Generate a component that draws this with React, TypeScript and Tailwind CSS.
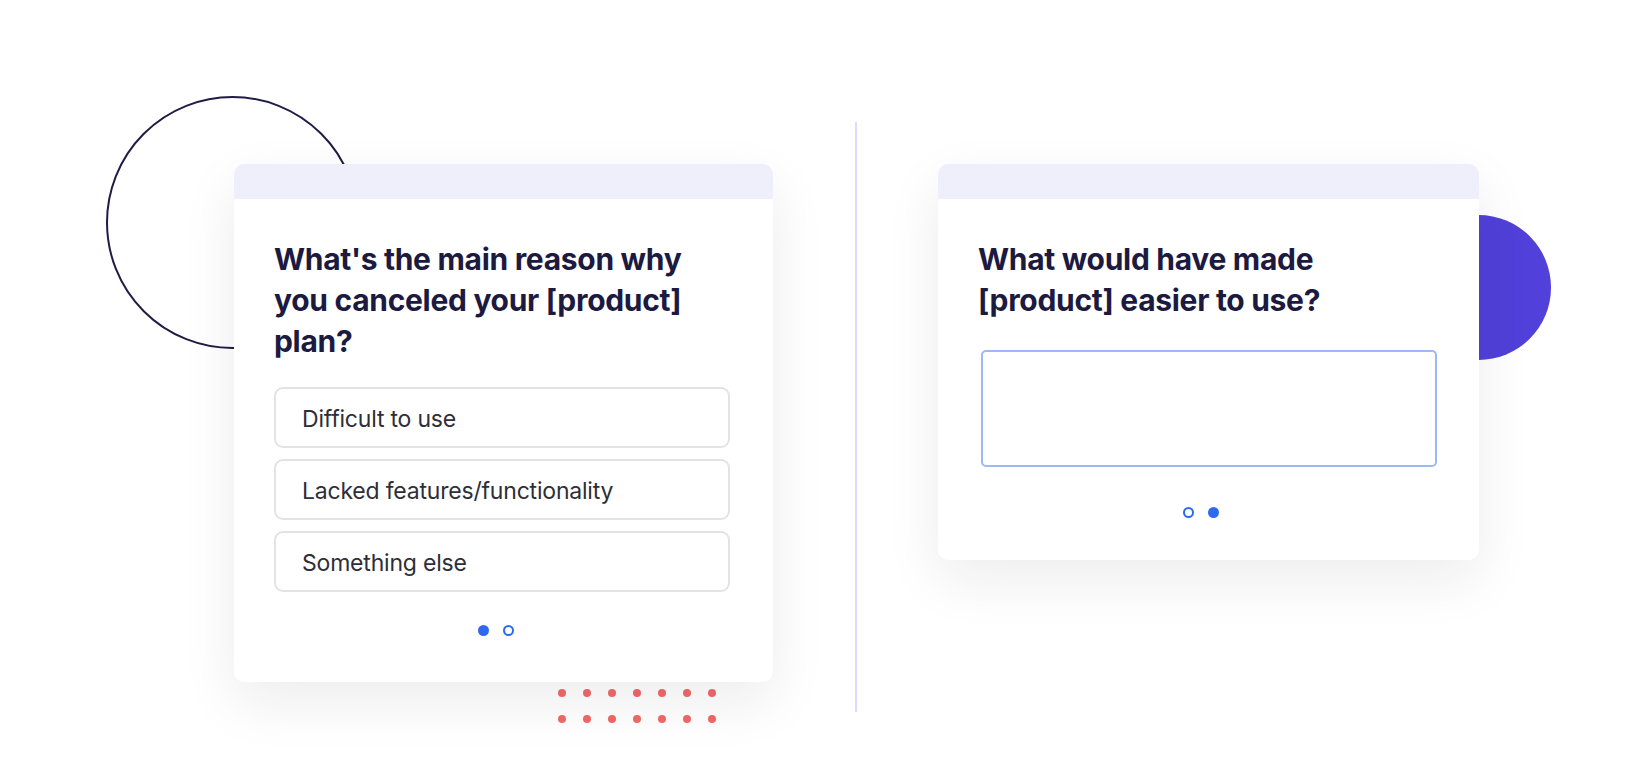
import React from "react";

const options = ["Difficult to use", "Lacked features/functionality", "Something else"];

function Dots({ active }: { active: number }) {
  return (
    <div className="flex justify-center gap-[14px] pr-[16px]">
      {[0, 1].map((i) =>
        i === active ? (
          <span key={i} className="w-[11px] h-[11px] rounded-full bg-[#2d6af0]" />
        ) : (
          <span key={i} className="w-[11px] h-[11px] rounded-full border-2 border-[#2d6af0] bg-white" />
        )
      )}
    </div>
  );
}

function Card({ children }: { children: React.ReactNode }) {
  return (
    <div className="relative z-10 bg-white rounded-[10px] overflow-hidden shadow-[0_20px_55px_rgba(20,20,40,0.08)]">
      <div className="h-[35px] bg-[#efeffb]" />
      {children}
    </div>
  );
}

export default function App() {
  return (
    <div
      className="w-full h-[768px] bg-white overflow-hidden"
      style={{ fontFamily: "Inter, 'Noto Sans', sans-serif" }}
    >
      <div className="flex items-start pl-[234px] pt-[122px]">
        {/* left question */}
        <div className="relative mt-[42px] w-[539px]">
          <div className="absolute left-[-128px] top-[-68px] w-[253px] h-[253px] rounded-full border-2 border-[#1f1d45]" />
          <Card>
            <div className="px-[40px] pt-[40px] pb-[46px]">
              <h2 className="text-[30px] leading-[41px] font-bold text-[#1c1a40] tracking-[-0.3px] w-[445px]">
                What's the main reason why you canceled your [product] plan?
              </h2>
              <div className="mt-[25px] flex flex-col gap-[11px]">
                {options.map((o) => (
                  <div
                    key={o}
                    className="h-[61px] w-[456px] flex items-center pl-[26px] pt-[3px] border-2 border-[#e3e3e6] rounded-[9px] text-[23px] tracking-[-0.2px] text-[#2e2e38]"
                  >
                    {o}
                  </div>
                ))}
              </div>
              <div className="mt-[33px]">
                <Dots active={0} />
              </div>
            </div>
          </Card>
          <div className="absolute left-[324px] top-[525px] grid grid-cols-7 gap-x-[17px] gap-y-[18px]">
            {Array.from({ length: 14 }).map((_, i) => (
              <span key={i} className="w-[8px] h-[8px] rounded-full bg-[#f36868]" />
            ))}
          </div>
        </div>

        {/* divider */}
        <div className="ml-[82px] w-[2px] h-[590px] bg-[#dcdcfa]" />

        {/* right question */}
        <div className="relative ml-[81px] mt-[42px] w-[541px]">
          <div className="absolute left-[468px] top-[51px] w-[145px] h-[145px] rounded-full bg-[#5140d9]" />
          <Card>
            <div className="px-[40px] pt-[40px] pb-[42px]">
              <h2 className="text-[30px] leading-[41px] font-bold text-[#1c1a40] tracking-[-0.3px] w-[400px]">
                What would have made [product] easier to use?
              </h2>
              <div className="mt-[29px] ml-[3px] h-[117px] w-[456px] border-2 border-[#9db8f6] rounded-[5px]" />
              <div className="mt-[40px]">
                <Dots active={1} />
              </div>
            </div>
          </Card>
        </div>
      </div>
    </div>
  );
}
